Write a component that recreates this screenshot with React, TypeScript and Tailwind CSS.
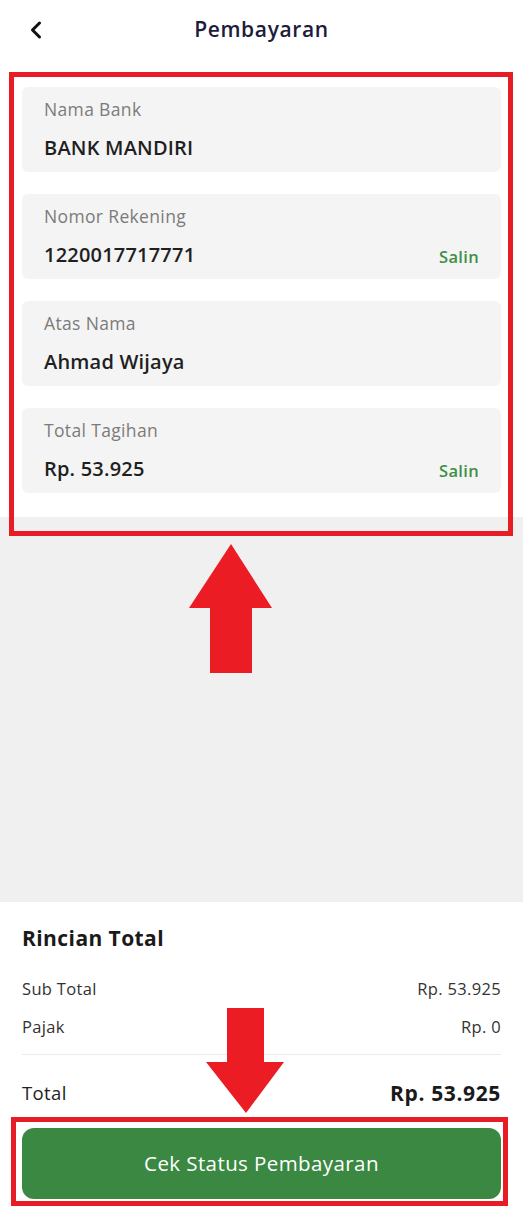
import { ChevronLeft } from 'lucide-react'

const font = { fontFamily: '"Open Sans", "Noto Sans", sans-serif' }

type Field = {
  label: string
  value: string
  copy?: boolean
}

const fields: Field[] = [
  { label: 'Nama Bank', value: 'BANK MANDIRI' },
  { label: 'Nomor Rekening', value: '1220017717771', copy: true },
  { label: 'Atas Nama', value: 'Ahmad Wijaya' },
  { label: 'Total Tagihan', value: 'Rp. 53.925', copy: true },
]

const InfoCard = ({ label, value, copy }: Field) => {
  return (
    <div className="flex h-[85px] flex-col rounded-md bg-[#f4f4f4] px-[22px] pt-[10px]">
      <span className="text-[17.5px] leading-6 tracking-[0.02em] text-[#7b7b7b]">
        {label}
      </span>
      <div className="mt-[13px] flex items-center justify-between">
        <span className="text-[20px] font-semibold leading-7 tracking-[0.01em] text-[#1f1f1f]">
          {value}
        </span>
        {copy && (
          <button
            type="button"
            className="mt-1 text-[16.5px] font-semibold tracking-[0.02em] text-[#3f8f45]"
          >
            Salin
          </button>
        )}
      </div>
    </div>
  )
}

const Header = () => {
  return (
    <div className="grid h-[60px] grid-cols-[1fr_auto_1fr] items-center bg-white px-[22px]">
      <button type="button" className="flex items-center text-[#111]">
        <ChevronLeft size={28} strokeWidth={2.6} />
      </button>
      <h1 className="text-[21px] font-semibold tracking-[0.03em] text-[#1e1b3b]">
        Pembayaran
      </h1>
      <span />
    </div>
  )
}

const SummaryRow = ({ label, value }: { label: string; value: string }) => {
  return (
    <div className="flex items-center justify-between text-[16.5px] leading-6 tracking-[0.02em] text-[#333]">
      <span>{label}</span>
      <span>{value}</span>
    </div>
  )
}

const Summary = () => {
  return (
    <div className="bg-white px-[22px] pb-[10px] pt-[21px]">
      <h2 className="text-[21px] font-bold leading-[30px] tracking-[0.02em] text-[#1a1a1a]">
        Rincian Total
      </h2>
      <div className="mt-[24px] flex flex-col gap-[14px]">
        <SummaryRow label="Sub Total" value="Rp. 53.925" />
        <SummaryRow label="Pajak" value="Rp. 0" />
      </div>
      <div className="mt-[15px] h-px bg-[#ececec]" />
      <div className="mt-[24px] flex items-center justify-between leading-7">
        <span className="text-[18.5px] tracking-[0.02em] text-[#222]">Total</span>
        <span className="text-[21px] font-bold tracking-[0.03em] text-[#1a1a1a]">
          Rp. 53.925
        </span>
      </div>
      <button
        type="button"
        className="mt-[21px] flex h-[71px] w-full items-center justify-center rounded-xl bg-[#3b8843] text-[20.5px] font-medium tracking-[0.02em] text-white"
      >
        Cek Status Pembayaran
      </button>
    </div>
  )
}

// annotation overlays from the screenshot
const Annotations = () => {
  return (
    <>
      <div className="absolute left-[9px] top-[72px] h-[464px] w-[504px] border-[5px] border-[#e81c24]" />
      <div className="absolute left-[11px] top-[1117px] h-[89px] w-[497px] border-[5px] border-[#e81c24]" />
      <svg
        className="absolute left-0 top-0"
        width="523"
        height="1209"
        viewBox="0 0 523 1209"
      >
        <polygon
          points="231,544 272,608 252,608 252,673 210,673 210,608 189,608"
          fill="#ec1c24"
        />
        <polygon
          points="227,1008 264,1008 264,1062 284,1062 246,1113 206,1062 227,1062"
          fill="#ec1c24"
        />
      </svg>
    </>
  )
}

export default function App() {
  return (
    <div
      className="relative flex h-[1209px] w-full flex-col overflow-hidden bg-[#f0f0f0]"
      style={font}
    >
      <Header />
      <div className="flex flex-col gap-[22px] bg-white px-[22px] pb-[24px] pt-[27px]">
        {fields.map((f) => (
          <InfoCard key={f.label} {...f} />
        ))}
      </div>
      <div className="flex-1" />
      <Summary />
      <Annotations />
    </div>
  )
}
